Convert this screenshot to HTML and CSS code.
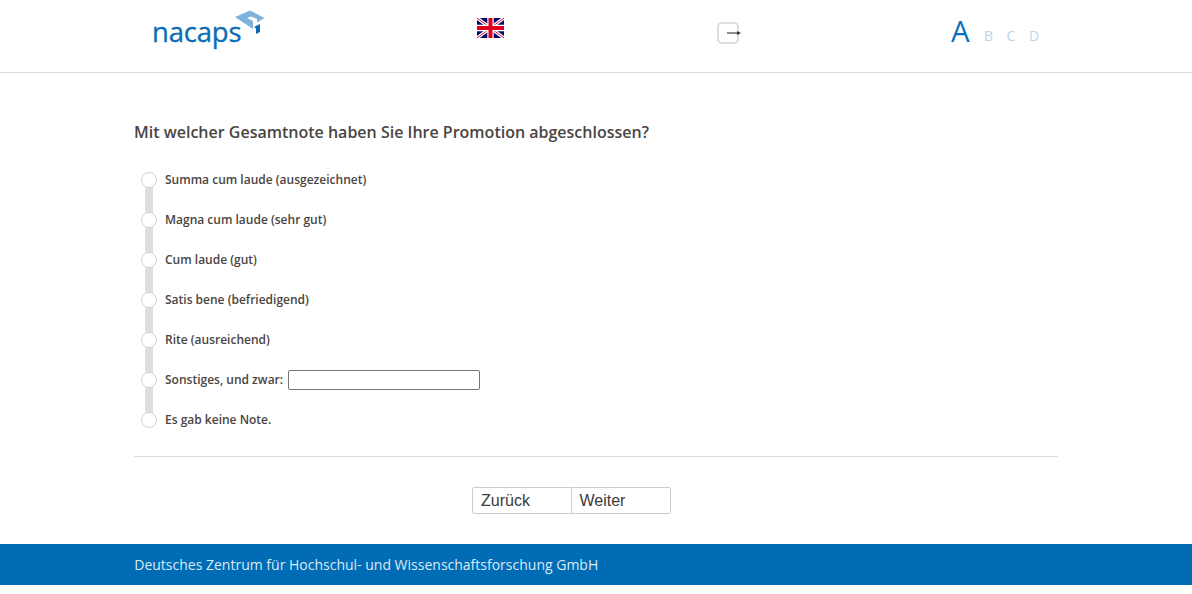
FILE: index.html
```html
<!DOCTYPE html>
<html lang="de">
<head>
<meta charset="utf-8">
<title>nacaps</title>
<link rel="stylesheet" href="styles.css">
</head>
<body>
<header class="top">
  <div class="logo">
    <span class="logo-text">nacaps</span>
    <svg class="logo-cap" width="30" height="24" viewBox="0 0 30 24" aria-hidden="true">
      <path fill="#7fb2da" d="M0 7 L15 0.5 L29.5 8 L22 12.5 L22 9 L16 6.5 L12 8 L18 11 L18 19 Z"/>
      <path fill="#0a6cb5" d="M19 17 L25 14 L25 22 L21 24 L21 18.5 Z"/>
    </svg>
  </div>
  <div class="flag-cell">
    <svg class="flag" width="27" height="20" viewBox="0 0 27 20" aria-hidden="true">
      <rect width="27" height="20" fill="#000a6e"/>
      <path d="M0 0 L27 20 M27 0 L0 20" stroke="#fff" stroke-width="3.4"/>
      <path d="M0 0 L27 20 M27 0 L0 20" stroke="#e0102a" stroke-width="1"/>
      <path d="M13.5 0 V20 M0 10 H27" stroke="#fff" stroke-width="6.4"/>
      <path d="M13.5 0 V20 M0 10 H27" stroke="#e0001a" stroke-width="4"/>
    </svg>
  </div>
  <div class="exit-cell">
    <svg width="25" height="23" viewBox="0 0 25 23" aria-hidden="true">
      <rect x="1" y="1" width="20" height="20" rx="3.5" fill="#fff" stroke="#d6d6d6" stroke-width="1.6"/>
      <path d="M10 11 H22" stroke="#444" stroke-width="1.2"/>
      <path d="M20 9 L24 11 L20 13 Z" fill="#333"/>
    </svg>
  </div>
  <div class="sizes">
    <span class="size-a">A</span>
    <span class="size-other">B</span>
    <span class="size-other">C</span>
    <span class="size-other">D</span>
  </div>
</header>

<main class="content">
  <h1 class="question">Mit welcher Gesamtnote haben Sie Ihre Promotion abgeschlossen?</h1>
  <ul class="options">
    <li class="option"><span class="radio"></span><span class="label">Summa cum laude (ausgezeichnet)</span></li>
    <li class="option"><span class="radio"></span><span class="label">Magna cum laude (sehr gut)</span></li>
    <li class="option"><span class="radio"></span><span class="label">Cum laude (gut)</span></li>
    <li class="option"><span class="radio"></span><span class="label">Satis bene (befriedigend)</span></li>
    <li class="option"><span class="radio"></span><span class="label">Rite (ausreichend)</span></li>
    <li class="option"><span class="radio"></span><span class="label">Sonstiges, und zwar:</span><input class="other" type="text" aria-label="Sonstiges"></li>
    <li class="option"><span class="radio"></span><span class="label">Es gab keine Note.</span></li>
  </ul>
  <hr class="rule">
  <div class="nav">
    <button class="nav-btn" type="button">Zurück</button><button class="nav-btn" type="button">Weiter</button>
  </div>
</main>

<footer class="bottom">Deutsches Zentrum für Hochschul- und Wissenschaftsforschung GmbH</footer>
</body>
</html>
```

FILE: styles.css
```css
* { box-sizing: border-box; }
html, body { margin: 0; padding: 0; background: #fff; }
body { font-family: "Open Sans", sans-serif; color: #4a4542; }

.top {
  height: 73px;
  border-bottom: 1px solid #dcdcdc;
  display: grid;
  grid-template-columns: 324px 240px 234px 1fr;
  padding-left: 152px;
}
.logo { display: flex; align-items: flex-start; }
.logo-text {
  font-family: "Open Sans", sans-serif;
  font-size: 27.5px;
  line-height: 32px;
  margin-top: 16px;
  color: #0a6cb5;
  letter-spacing: -0.2px;
  -webkit-text-stroke: 0.3px #0a6cb5;
}
.logo-cap { margin-top: 10px; margin-left: -6px; flex: none; }
.flag-cell { padding: 18px 0 0 1px; }
.flag { display: block; }
.exit-cell { padding: 22px 0 0 1px; }
.exit-cell svg { display: block; }
.sizes { display: flex; align-items: baseline; padding: 11px 0 0 1px; color: #0a6cb5; }
.size-a { font-size: 29.5px; font-weight: 500; color: #0a6fc0; line-height: 40px; width: 33px; }
.size-other { font-size: 14px; width: 22.5px; color: #b9d6ee; transform: translateY(-1px); }

.content { width: 924px; margin: 0 0 0 134px; }
.question {
  margin: 47px 0 0;
  font-size: 16px;
  line-height: 24px;
  font-weight: 600;
  color: #4a4542;
}
.options {
  list-style: none;
  margin: 16px 0 0;
  padding: 0;
  position: relative;
}
.options::before {
  content: "";
  position: absolute;
  left: 11px;
  width: 8px;
  top: 20px;
  bottom: 20px;
  background: #dedede;
}
.option {
  position: relative;
  height: 40px;
  display: flex;
  align-items: center;
  padding-left: 7px;
}
.radio {
  width: 16px;
  height: 16px;
  border-radius: 50%;
  border: 1px solid #d4d4d4;
  background: #fff;
  flex: none;
  margin-right: 8px;
}
.label { font-size: 12px; font-weight: 600; color: #4a4542; line-height: 18px; }
.other {
  width: 192px;
  height: 20px;
  margin: 0 0 0 5px;
  padding: 0;
  border: 1px solid #767676;
  border-radius: 2px;
  background: #fff;
}
.rule { margin: 16px 0 0; border: 0; border-top: 1px solid #dcdcdc; height: 0; }
.nav { display: flex; justify-content: center; margin-top: 30px; padding-right: 49px; }
.nav-btn {
  width: 99.5px;
  height: 27px;
  padding: 0 0 0 8px;
  text-align: left;
  font-family: "Liberation Sans", Arial, sans-serif;
  font-size: 16px;
  color: #3a3a3a;
  background: #fff;
  border: 1px solid #ccc;
}
.nav-btn:first-child { border-radius: 2px 0 0 2px; }
.nav-btn:last-child { border-left: 0; border-radius: 0 2px 2px 0; }

.bottom {
  margin-top: 30px;
  height: 41px;
  background: #006cb5;
  color: #dbe9f5;
  font-size: 14px;
  line-height: 41px;
  padding-left: 134.25px;
}
```
